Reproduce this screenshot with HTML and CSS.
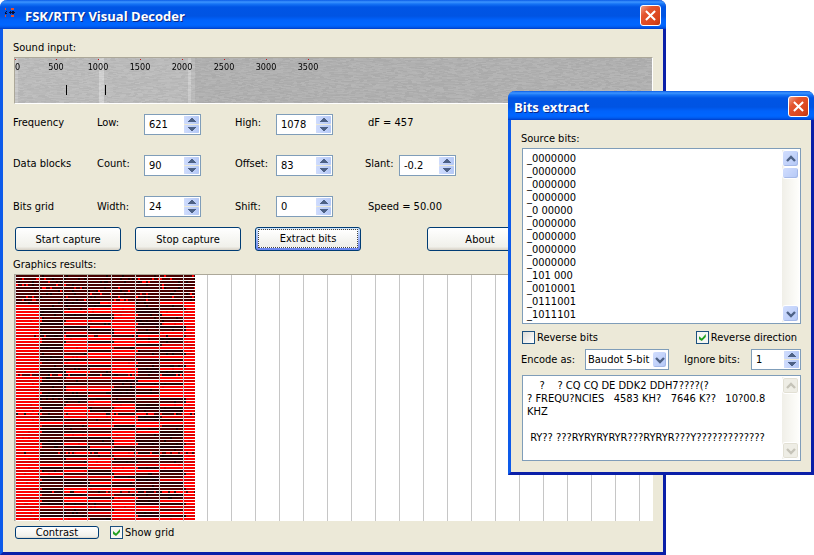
FILE: index.html
```html
<!DOCTYPE html>
<html lang="en">
<head>
<meta charset="utf-8">
<title>FSK/RTTY Visual Decoder</title>
<link rel="stylesheet" href="styles.css">
</head>
<body>
<svg class="defs" aria-hidden="true">
  <symbol id="up" viewBox="0 0 8 5"><path d="M0 4h8v-1h-1v-1h-1v-1h-1v-1h-2v1h-1v1h-1v1h-1z" fill="currentColor"/></symbol>
  <symbol id="down" viewBox="0 0 8 5"><path d="M0 0h8v1h-1v1h-1v1h-1v1h-2v-1h-1v-1h-1v-1h-1z" fill="currentColor"/></symbol>
  <symbol id="chev-up" viewBox="0 0 10 8"><path d="M1 6l4-4 4 4" fill="none" stroke="currentColor" stroke-width="2.4"/></symbol>
  <symbol id="chev-down" viewBox="0 0 10 8"><path d="M1 2l4 4 4-4" fill="none" stroke="currentColor" stroke-width="2.4"/></symbol>
  <symbol id="cross" viewBox="0 0 12 12"><path d="M1 1l10 10M11 1L1 11" fill="none" stroke="#fff" stroke-width="2.2"/></symbol>
</svg>

<main class="window decoder">
  <header class="titlebar">
    <svg class="app-icon" viewBox="0 0 12 10" shape-rendering="crispEdges" aria-hidden="true">
      <path d="M0 0h1v2h-1zM6 0h3v2h-3zM0 7h1v2h-1zM6 7h3v2h-3z" fill="#e8502a"/>
      <path d="M1 3h1v1h-1v1h1v1h-2v-2h1zM5 3h1v1h1v-1h2v1h1v1h-1v1h-2v-1h-1v1h-1v-1h-1v-1h1z" fill="#06103c"/>
    </svg>
    <h1>FSK/RTTY Visual Decoder</h1>
    <button class="close" aria-label="Close"><svg><use href="#cross"/></svg></button>
  </header>
  <div class="decoder-body">
    <div class="caption">Sound input:</div>
    <div class="spectrum">
      <canvas id="spectrum"></canvas>
      <div class="scale"><span>0</span><span>500</span><span>1000</span><span>1500</span><span>2000</span><span>2500</span><span>3000</span><span>3500</span></div>
      <i class="marker low"></i><i class="marker high"></i>
    </div>

    <div class="params">
      <span>Frequency</span>
      <label for="low">Low:</label>
      <div class="spin"><input id="low" value="621"><div class="steps"><button aria-label="Increase"><svg><use href="#up"/></svg></button><button aria-label="Decrease"><svg><use href="#down"/></svg></button></div></div>
      <label for="high">High:</label>
      <div class="spin"><input id="high" value="1078"><div class="steps"><button aria-label="Increase"><svg><use href="#up"/></svg></button><button aria-label="Decrease"><svg><use href="#down"/></svg></button></div></div>
      <output>dF = 457</output>

      <span>Data blocks</span>
      <label for="count">Count:</label>
      <div class="spin"><input id="count" value="90"><div class="steps"><button aria-label="Increase"><svg><use href="#up"/></svg></button><button aria-label="Decrease"><svg><use href="#down"/></svg></button></div></div>
      <label for="offset">Offset:</label>
      <div class="spin"><input id="offset" value="83"><div class="steps"><button aria-label="Increase"><svg><use href="#up"/></svg></button><button aria-label="Decrease"><svg><use href="#down"/></svg></button></div></div>
      <label for="slant">Slant:</label>
      <div class="spin"><input id="slant" value="-0.2"><div class="steps"><button aria-label="Increase"><svg><use href="#up"/></svg></button><button aria-label="Decrease"><svg><use href="#down"/></svg></button></div></div>

      <span>Bits grid</span>
      <label for="width">Width:</label>
      <div class="spin"><input id="width" value="24"><div class="steps"><button aria-label="Increase"><svg><use href="#up"/></svg></button><button aria-label="Decrease"><svg><use href="#down"/></svg></button></div></div>
      <label for="shift">Shift:</label>
      <div class="spin"><input id="shift" value="0"><div class="steps"><button aria-label="Increase"><svg><use href="#up"/></svg></button><button aria-label="Decrease"><svg><use href="#down"/></svg></button></div></div>
      <output>Speed = 50.00</output>
    </div>

    <div class="actions">
      <button class="push">Start capture</button>
      <button class="push">Stop capture</button>
      <button class="push focused"><span>Extract bits</span></button>
      <button class="push about">About</button>
    </div>

    <div class="caption">Graphics results:</div>
    <div class="results"><canvas id="results"></canvas></div>

    <div class="footer">
      <button class="push small">Contrast</button>
      <label class="check"><input type="checkbox" checked>Show grid</label>
    </div>
  </div>
</main>

<section class="window extract">
  <header class="titlebar">
    <h2>Bits extract</h2>
    <button class="close" aria-label="Close"><svg><use href="#cross"/></svg></button>
  </header>
  <div class="extract-body">
    <label class="caption" for="source">Source bits:</label>
    <div class="memo source">
      <textarea id="source" spellcheck="false">_0000000
_0000000
_0000000
_0000000
_0 00000
_0000000
_0000000
_0000000
_0000000
_101 000
_0010001
_0111001
_1011101</textarea>
      <div class="scroll"><button aria-label="Scroll up"><svg><use href="#chev-up"/></svg></button><i class="thumb"></i><button class="last" aria-label="Scroll down"><svg><use href="#chev-down"/></svg></button></div>
    </div>
    <div class="row checks">
      <label class="check"><input type="checkbox">Reverse bits</label>
      <label class="check"><input type="checkbox" checked>Reverse direction</label>
    </div>
    <div class="row encode">
      <label for="code">Encode as:</label>
      <div class="combo"><select id="code"><option>Baudot 5-bit</option></select><span class="drop"><svg><use href="#chev-down"/></svg></span></div>
      <label class="ignore" for="ignore">Ignore bits:</label>
      <div class="spin"><input id="ignore" value="1"><div class="steps"><button aria-label="Increase"><svg><use href="#up"/></svg></button><button aria-label="Decrease"><svg><use href="#down"/></svg></button></div></div>
    </div>
    <div class="memo decoded">
      <textarea aria-label="Decoded text" spellcheck="false">    ?    ? CQ CQ DE DDK2 DDH7????(?
? FREQU?NCIES   4583 KH?   7646 K??   10?00.8
KHZ

 RY?? ???RYRYRYRYR???RYRYR???Y?????????????</textarea>
      <div class="scroll off"><button disabled aria-label="Scroll up"><svg><use href="#chev-up"/></svg></button><button disabled class="last" aria-label="Scroll down"><svg><use href="#chev-down"/></svg></button></div>
    </div>
  </div>
</section>
<script src="app.js"></script>
</body>
</html>
```
FILE: styles.css
```css
* { box-sizing: border-box; }
body {
  margin: 0;
  background: #fff;
  color: #000;
  font: 11px/13px "DejaVu Sans Condensed", "DejaVu Sans", sans-serif;
}
input, select, button, textarea { font: inherit; color: inherit; margin: 0; padding: 0; border-radius: 0; }
svg { display: block; }
canvas { display: block; width: 100%; height: 100%; }
.defs { position: absolute; width: 0; height: 0; }

.window {
  background: #ece9d8;
  border: solid;
  border-width: 0 3px 3px;
  border-color: #0d5bea #0a1fa8 #0a1fa8 #0d5bea;
  border-radius: 7px 7px 0 0;
}
.decoder { width: calc(100% - 148px); min-height: 555px; }
.extract { position: absolute; top: 91px; right: 0; width: 306px; }

.titlebar {
  display: flex;
  align-items: center;
  height: 29px;
  margin: 0 -3px;
  padding: 2px 5px 0 6px;
  border-radius: 7px 7px 0 0;
  background: linear-gradient(#0a5be6 0, #3d95ff 2px, #1573f5 4px, #0055e5 7px, #0054e3 16px, #0062fb 20px, #0066ff 25px, #005bee 27px, #003dc8 29px);
}
.titlebar h1, .titlebar h2 {
  flex: 1;
  margin: 0;
  color: #fff;
  font: bold 13px/18px "Open Sans", "Noto Sans", sans-serif;
  text-shadow: 1px 1px #0a2a8a;
}
.app-icon { width: 12px; height: 10px; margin: 0 6px 5px 0; }
.decoder .titlebar { padding-left: 5px; }
.titlebar h1 { padding-left: 2px; }
.close {
  width: 21px;
  height: 21px;
  padding: 4px;
  border: 1px solid #fff;
  border-radius: 3px;
  background: linear-gradient(135deg, #f0a088 0, #e4552f 30%, #d8431a 80%, #b83410 100%);
}
.close svg { width: 11px; height: 11px; }

.decoder-body { padding: 12px 10px 0 11px; }
.decoder-body .caption { margin-left: -1px; }
.spectrum {
  position: relative;
  height: 47px;
  margin-top: 3px;
  border: 1px solid #fff;
  border-top-color: #aca899;
  border-left-color: #aca899;
}
.scale {
  position: absolute;
  top: 0;
  left: 0;
  display: grid;
  grid-template-columns: 20px repeat(7, 42px);
  font-size: 9px;
  line-height: 12px;
  text-align: center;
}
.scale span { padding-top: 3px; background: linear-gradient(#c01818, #c01818) 21px 1px / 1px 1px no-repeat; }
.scale span:first-child { text-align: left; background-position: 0 1px; }
.marker { position: absolute; top: 27px; width: 1px; height: 10px; background: #000; }
.low { left: 51px; }
.high { left: 90px; }

.params {
  display: grid;
  grid-template-columns: 84px 47px 91px 41px 89px 34px 57px;
  grid-auto-rows: 21px;
  row-gap: 20px;
  align-items: center;
  margin: 10px 0 0 -1px;
}
.params .spin { width: 57px; }
.params output { grid-column: 6 / 8; padding-left: 3px; white-space: nowrap; }
.params > span, .params > label, .params output { padding-bottom: 4px; }
.params > :nth-child(n+13) { padding-bottom: 0; }

.spin, .combo, .memo { display: flex; background: #fff; border: 1px solid #7f9db9; }
.params .spin, .spin { height: 21px; padding: 1px; }
.spin input { flex: 1; min-width: 0; border: 0; padding-left: 3px; background: none; outline: 0; }
.steps { display: flex; flex-direction: column; gap: 1px; width: 15px; background: #ece9d8; }
.steps button {
  display: grid;
  place-items: center;
  flex: 1;
  min-height: 0;
  border: 0;
  border-radius: 1px;
  background: linear-gradient(90deg, #cfdcfd, #b4c8f6);
  color: #4d6185;
}
.steps svg { width: 8px; height: 5px; }

.actions { display: flex; gap: 14px; margin: 10px 0 7px 1px; }
.push {
  width: 106px;
  height: 24px;
  border: 1px solid #003c74;
  border-radius: 3px;
  background: linear-gradient(#fff, #f0f0ea 85%, #d6d0c5);
  text-align: center;
}
.focused { padding: 1px 2px 2px; background: linear-gradient(#cee7ff, #6982ee); }
.focused span {
  display: grid;
  place-items: center;
  height: 19px;
  border: 1px dotted #444;
  background: linear-gradient(#fff, #eeeee8);
}
.about { margin-left: 52px; }

.results {
  height: 247px;
  margin-top: 3px;
  border: solid #aca899;
  border-width: 1px 0 0 1px;
  background: #fff;
}
.footer { display: flex; align-items: center; gap: 11px; padding: 5px 0 0 1px; }
.small { width: 84px; height: 13px; line-height: 11px; }

.check { display: flex; align-items: center; gap: 2px; }
.check input {
  appearance: none;
  width: 13px;
  height: 13px;
  border: 1px solid #1c5180;
  background: linear-gradient(135deg, #dcdcd7, #fff);
}
.check input:checked { background: #f6f6f3; position: relative; }
.check input:checked::after {
  content: "";
  position: absolute;
  left: 2px;
  top: 2px;
  width: 7px;
  height: 7px;
  background: #21a121;
  clip-path: polygon(0 29%, 43% 64%, 100% 0, 100% 43%, 43% 100%, 0 72%);
}

.extract-body { padding: 12px 10px 11px 11px; }
.extract-body .caption { display: block; margin: 0 0 3px -1px; }
.memo { padding: 1px; }
.memo textarea {
  flex: 1;
  min-width: 0;
  border: 0;
  padding: 2px 3px;
  resize: none;
  overflow: hidden;
  white-space: pre;
  outline: 0;
}
.source { height: 176px; }
.decoded { height: 86px; }
.scroll { display: flex; flex-direction: column; width: 17px; background: linear-gradient(90deg, #f0efe8, #fefefb); }
.scroll button, .thumb, .drop {
  display: grid;
  place-items: center;
  height: 17px;
  border: 1px solid #fff;
  border-radius: 3px;
  background: linear-gradient(135deg, #d2defe, #b4c8f6);
  box-shadow: inset -1px -1px #a5b9e8;
  color: #4d6185;
}
.thumb { height: 12px; }
.scroll .last { margin-top: auto; }
.scroll svg, .drop svg { width: 10px; height: 8px; }
.scroll.off button { background: #eeede5; box-shadow: inset 0 0 0 1px #e2e0d4; color: #c5c3b8; }

.row { display: flex; align-items: center; }
.checks { justify-content: space-between; padding-right: 4px; margin: 7px 0 5px; }
.encode { margin-bottom: 5px; }
.encode > label:first-child { margin-left: -1px; }
.combo { width: 84px; height: 21px; margin-left: auto; position: relative; }
.combo select { appearance: none; width: 100%; border: 0; background: none; padding: 0 0 0 2px; outline: 0; }
.drop { position: absolute; top: 1px; right: 1px; width: 15px; pointer-events: none; }
.ignore { margin: 0 11px 0 15px; }
.encode .spin { width: 50px; }
```
FILE: app.js
```js
let seed = 7;
function rnd() {
  seed = (seed * 1664525 + 1013904223) >>> 0;
  return seed / 4294967296;
}
function context(id) {
  const c = document.getElementById(id);
  c.width = c.clientWidth;
  c.height = c.clientHeight;
  return [c.getContext('2d'), c.width, c.height];
}

// Waterfall strip of the sound card input
(function () {
  const [g, w, h] = context('spectrum');
  for (let y = 0; y < h; y++) {
    let run = 0, v = 0;
    for (let x = 0; x < w; x++) {
      if (run-- <= 0) { run = 1 + rnd() * 3; v = (rnd() - 0.5) * 13; }
      let b = x < 180 ? 186 : 176;
      if (x < 3) b = 198;
      if (x >= 84 && x < 89) b = 207;
      if (x >= 173 && x < 176) b = 202;
      const n = Math.round(b + v);
      g.fillStyle = `rgb(${n},${n},${n})`;
      g.fillRect(x, y, 1, 1);
    }
  }
})();

// One string per scan line: 1 = mark (red), 0 = space (dark), h = space then mark
const lines = (
  '00000000 00000000 00000000 00000000 00000000 00000000 00000000 00000000 00000000 ' +
  '000h1011 10001001 10011001 10111011 10001011 10001001 10111001 10101011 10011001 10001001 ' +
  '10101011 10010111 10111001 10101101 10111011 10110111 10101001 10011001 10111111 10000001 ' +
  '10111011 10001001 10011011 10101001 00000001 10111011 10000111 10000001 10110111 10110011 ' +
  '10000011 10010111 10000001 10010001 10111011 10101001 10101001 10110101 10111011 10001001 ' +
  '11111111 10010101 10000001 10001101 10111001 10001001 10001001 10101001 10010001 10000001 ' +
  '10111011 10001101 10110001 10010001 11111111 10011011 10101101 11001001 10110001 10001011 ' +
  '10010001 10000001 10111001 10101011 10010001 10101001 10111011 10001001 11111111 10001101 ' +
  '10011011 10001001 11101111'
).split(' ');

(function () {
  const [g, w, h] = context('results');
  const reds = ['#ff0000', '#ff0000', '#d80000'];
  const darks = ['#480000', '#280008', '#2c0000', '#500000'];
  lines.forEach((bits, r) => {
    const y = r * 3;
    for (let c = 0; c < 8; c++) {
      const x0 = 1 + c * 24;
      const end = c === 7 ? 11 : 24;
      const red = reds[(r + (c >> 1)) % 3];
      const dark = r < 9 ? '#480000' : darks[(r * 3 + c) % 4];
      const late = r > 9 && c && bits[c - 1] !== bits[c] && rnd() < 0.3 ? 2 : 0;
      for (let x = 0; x < end; x += 2) {
        let on = bits[c] === '1' || (bits[c] === 'h' && x > 11);
        if (x < late) on = !on;
        const p = rnd();
        if (r < 9 && p < 0.07) on = true;
        if (r % 13 === 7 && p < 0.16) on = !on;
        g.fillStyle = on ? (p > 0.95 ? '#e00000' : red) : (p > 0.93 ? '#180000' : dark);
        g.fillRect(x0 + x, y, Math.min(2, end - x), 2);
      }
    }
  });
  g.fillStyle = '#c6c6c6';
  g.fillRect(0, 0, 1, h);
  for (let x = 24; x < w; x += 24) g.fillRect(x, 0, 1, h);
})();
```
